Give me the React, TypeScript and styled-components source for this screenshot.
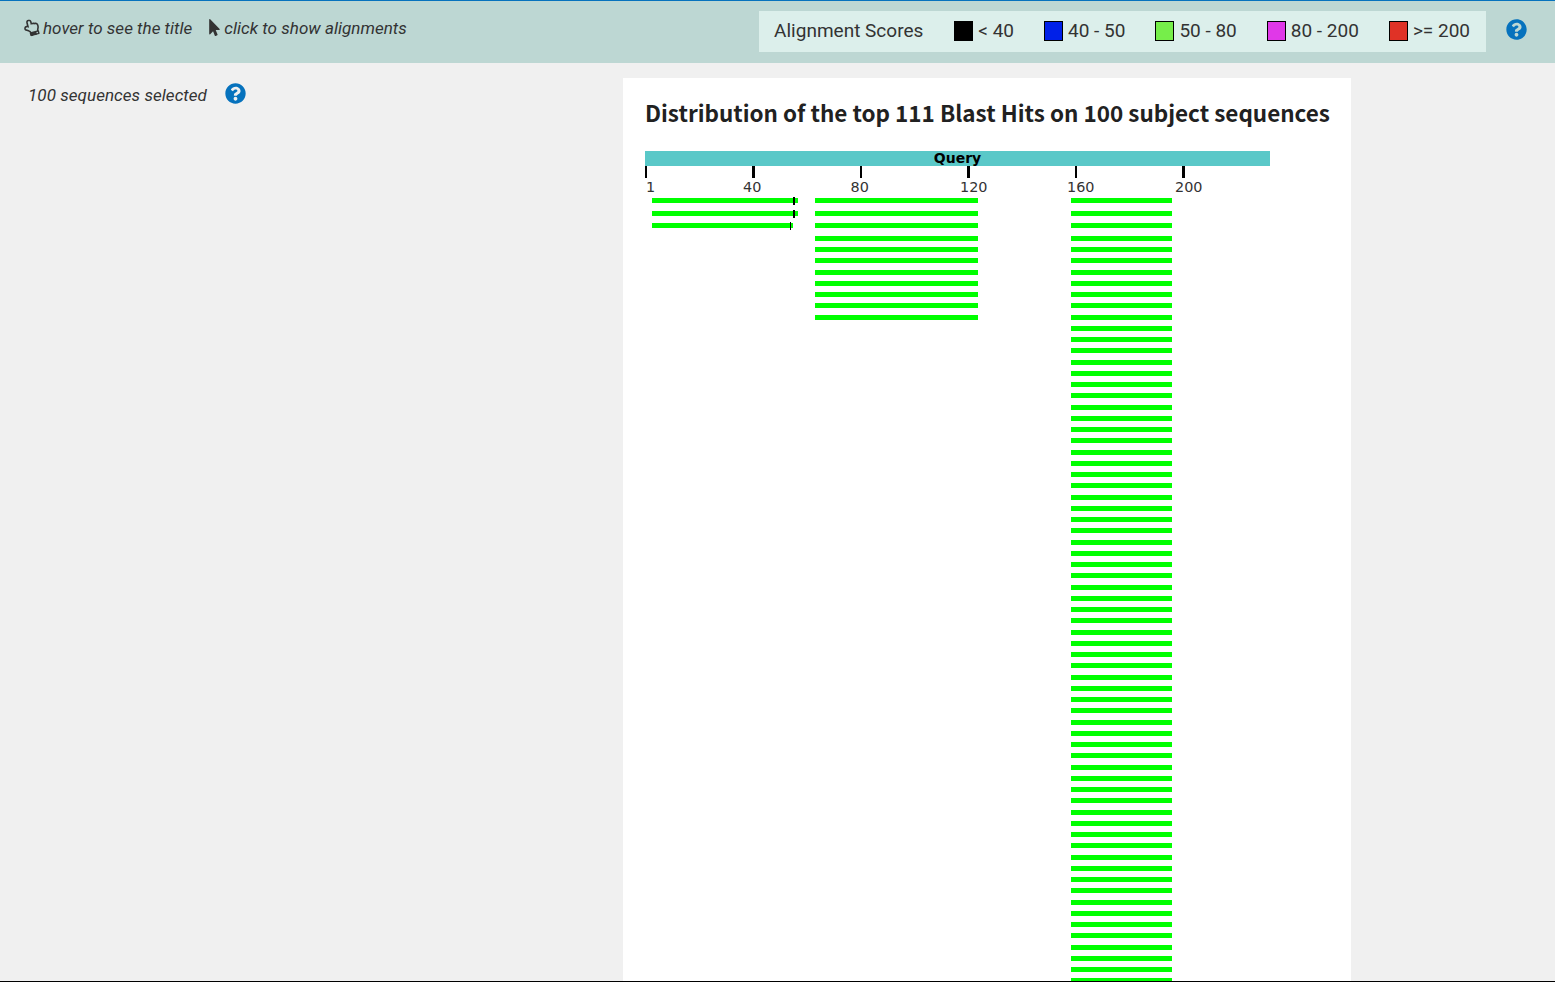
import React from 'react'
import styled, { createGlobalStyle } from 'styled-components'
import { FaMousePointer, FaQuestionCircle, FaRegHandPointUp } from 'react-icons/fa'

const GlobalStyle = createGlobalStyle`
  html, body {
    height: 100%;
    margin: 0;
    overflow: hidden;
  }

  body {
    background: #f0f0f0;
    color: #333;
    font-family: Roboto, "Liberation Sans", sans-serif;
  }
`

const Page = styled.div`
  border-bottom: 1px solid #000;
  box-sizing: border-box;
  display: flex;
  flex-direction: column;
  height: 982px;
  overflow: hidden;
  width: 1555px;
`

const TopBar = styled.header`
  align-items: flex-start;
  background: #bdd7d3;
  border-top: 1px solid #0672bd;
  box-sizing: border-box;
  display: flex;
  flex: none;
  height: 63px;
  justify-content: space-between;
  padding: 10px 28px 0 23px;
`

const Hints = styled.div`
  align-items: center;
  display: flex;
  font-size: 17px;
  font-style: italic;
  gap: 14px;
  height: 33px;
  letter-spacing: 0.03px;
`

const Hint = styled.span`
  align-items: center;
  display: flex;
  gap: 3px;
  white-space: nowrap;

  svg {
    font-style: normal;
  }
`

const HandIcon = styled(FaRegHandPointUp)`
  font-size: 17px;
  transform: rotate(-15deg);
`

const PointerIcon = styled(FaMousePointer)`
  font-size: 17px;
  margin-right: -2px;
`

const LegendRow = styled.div`
  align-items: flex-start;
  display: flex;
  gap: 20px;
`

const Legend = styled.div`
  align-items: center;
  background: #dcefeb;
  box-sizing: border-box;
  display: flex;
  font-size: 19px;
  height: 41px;
  padding: 0 16px 2px 15px;
  white-space: nowrap;
`

const LegendTitle = styled.span`
  margin-right: 31px;
`

const LegendItem = styled.span`
  align-items: center;
  display: flex;
  gap: 5px;
  margin-right: 30px;

  &:last-child {
    margin-right: 0;
  }
`

const Swatch = styled.span<{ $color: string }>`
  background: ${props => props.$color};
  border: 1px solid #000;
  box-sizing: border-box;
  display: block;
  height: 20px;
  width: 19px;
`

const HelpIcon = styled(FaQuestionCircle)`
  color: #0672bd;
  display: block;
  flex: none;
`

const BarHelp = styled.span`
  display: block;
  font-size: 21px;
  padding-top: 8px;
`

const Main = styled.main`
  display: grid;
  flex: 1;
  grid-template-columns: 623px 728px;
  min-height: 0;
  padding-top: 15px;
`

const Selection = styled.div`
  align-items: flex-start;
  display: flex;
  font-size: 17px;
  font-style: italic;
  gap: 18px;
  letter-spacing: 0.06px;
  padding: 5px 0 0 28px;
`

const SelectionText = styled.span`
  line-height: 24px;
  white-space: nowrap;
`

const SelectionHelp = styled.span`
  display: block;
  font-size: 21px;
`

const Card = styled.section`
  background: #fff;
  box-sizing: border-box;
  min-height: 0;
  overflow: hidden;
  padding: 16px 0 0 22px;
`

const Title = styled.h2`
  color: #212121;
  font-family: "Noto Sans CJK SC", "Noto Sans", sans-serif;
  font-size: 22.46px;
  font-weight: 700;
  line-height: 36px;
  margin: 0 0 21px;
  white-space: nowrap;
`

const Chart = styled.svg`
  display: block;
`

const AxisLabel = styled.text`
  fill: #333;
  font-family: "DejaVu Sans", sans-serif;
  font-size: 14.4px;
`

const QueryLabel = styled.text`
  fill: #000;
  font-family: "DejaVu Sans", sans-serif;
  font-size: 14px;
  font-weight: 700;
`

const LEGEND = [
  { label: '< 40', color: '#000000' },
  { label: '40 - 50', color: '#0020e8' },
  { label: '50 - 80', color: '#76ee4a' },
  { label: '80 - 200', color: '#e038e8' },
  { label: '>= 200', color: '#e03226' },
]

const TICKS = [
  { label: '1', x: 0, width: 2, textX: 1 },
  { label: '40', x: 107, width: 3, textX: 98 },
  { label: '80', x: 215, width: 2, textX: 205.5 },
  { label: '120', x: 322, width: 3, textX: 315 },
  { label: '160', x: 430, width: 2, textX: 422 },
  { label: '200', x: 537, width: 3, textX: 530 },
]

// chart coordinates start at the left end of the query bar (645, 151)
const CHART_LEFT = 645
const CHART_TOP = 151
const HIT_COUNT = 100

const rowY = (index: number) => {
  if (index < 3) return [198, 211, 223][index] - CHART_TOP
  return Math.ceil(236 + (index - 3) * 11.25 - 0.5) - CHART_TOP
}

const firstColumnHits = [
  { end: 798, mark: 793, markWidth: 2 },
  { end: 798, mark: 793, markWidth: 2 },
  { end: 793, mark: 790, markWidth: 1 },
]

const App = () => (
  <>
    <GlobalStyle />
    <Page>
      <TopBar>
        <Hints>
          <Hint>
            <HandIcon />
            hover to see the title
          </Hint>
          <Hint>
            <PointerIcon />
            click to show alignments
          </Hint>
        </Hints>
        <LegendRow>
          <Legend>
            <LegendTitle>Alignment Scores</LegendTitle>
            {LEGEND.map(item => (
              <LegendItem key={item.label}>
                <Swatch $color={item.color} />
                {item.label}
              </LegendItem>
            ))}
          </Legend>
          <BarHelp>
            <HelpIcon />
          </BarHelp>
        </LegendRow>
      </TopBar>
      <Main>
        <Selection>
          <SelectionText>100 sequences selected</SelectionText>
          <SelectionHelp>
            <HelpIcon />
          </SelectionHelp>
        </Selection>
        <Card>
          <Title>Distribution of the top 111 Blast Hits on 100 subject sequences</Title>
          <Chart width={640} height={1290} viewBox="0 0 640 1290">
            <rect x={0} y={0} width={625} height={15} fill="#5ac8c8" />
            <QueryLabel x={312.5} y={12} textAnchor="middle">
              Query
            </QueryLabel>
            {TICKS.map(tick => (
              <g key={tick.label}>
                <rect x={tick.x} y={15} width={tick.width} height={12} fill="#000" />
                <AxisLabel x={tick.textX} y={41}>
                  {tick.label}
                </AxisLabel>
              </g>
            ))}
            {firstColumnHits.map((hit, i) => (
              <g key={i}>
                <rect x={652 - CHART_LEFT} y={rowY(i)} width={hit.end - 652} height={5} fill="#00ff00" />
                <rect x={hit.mark - CHART_LEFT} y={rowY(i) - 1} width={hit.markWidth} height={8} fill="#000" />
              </g>
            ))}
            {Array.from({ length: 11 }, (_, i) => (
              <rect key={i} x={815 - CHART_LEFT} y={rowY(i)} width={163} height={5} fill="#00ff00" />
            ))}
            {Array.from({ length: HIT_COUNT }, (_, i) => (
              <rect key={i} x={1071 - CHART_LEFT} y={rowY(i)} width={101} height={5} fill="#00ff00" />
            ))}
          </Chart>
        </Card>
      </Main>
    </Page>
  </>
)

export default App
